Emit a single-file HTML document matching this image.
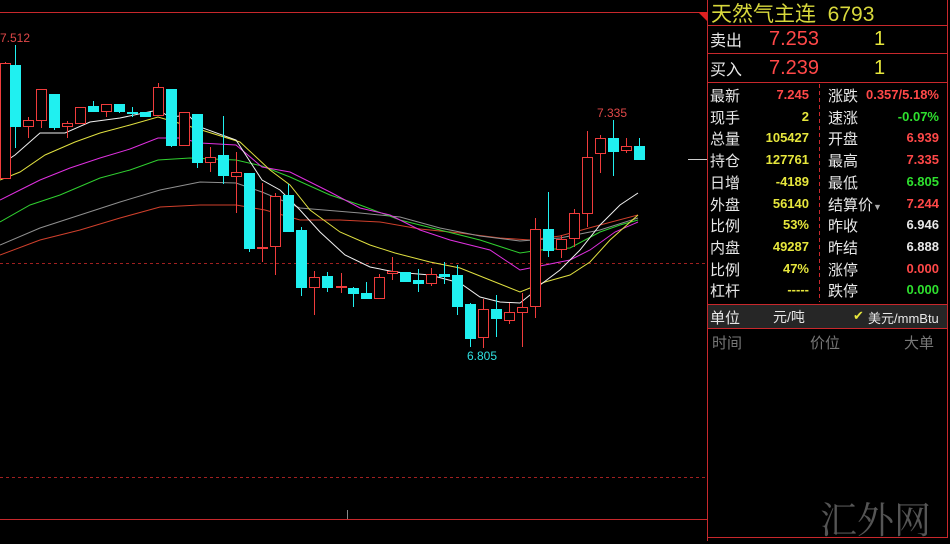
<!DOCTYPE html>
<html><head><meta charset="utf-8"><style>
*{margin:0;padding:0;box-sizing:border-box}
body{width:950px;height:541px;background:#000;overflow:hidden;position:relative;font-family:"Liberation Sans","Noto Sans CJK SC",sans-serif}
.t{position:absolute;white-space:nowrap}
.l{color:#e8e8e8;font-size:15px}
.y{color:#e6e63c;font-weight:bold;font-size:13px;text-align:right}
.r{color:#ff4848;font-weight:bold;font-size:13px;text-align:right}
.g{color:#2ee02e;font-weight:bold;font-size:13px;text-align:right}
.w{color:#e8e8e8;font-weight:bold;font-size:13px;text-align:right}
</style></head><body>
<svg width="950" height="541" style="position:absolute;left:0;top:0">
<line x1="0" y1="12.5" x2="707" y2="12.5" stroke="#c8282c"/>
<polygon points="698,12 707,12 707,21" fill="#e02020"/>
<line x1="707.5" y1="0" x2="707.5" y2="541" stroke="#c8282c"/>
<line x1="947.5" y1="0" x2="947.5" y2="537" stroke="#c8282c"/>
<line x1="707" y1="537.5" x2="948" y2="537.5" stroke="#c8282c"/>
<line x1="0" y1="519.5" x2="707" y2="519.5" stroke="#c8282c"/>
<line x1="707" y1="25.5" x2="948" y2="25.5" stroke="#c8282c"/>
<line x1="707" y1="53.5" x2="948" y2="53.5" stroke="#c8282c"/>
<line x1="707" y1="82.5" x2="948" y2="82.5" stroke="#c8282c"/>
<line x1="819.5" y1="84" x2="819.5" y2="302" stroke="#c8282c" stroke-dasharray="4,3"/>
<rect x="708" y="304" width="239" height="24" fill="#262626"/>
<line x1="707" y1="304.5" x2="948" y2="304.5" stroke="#c8282c"/>
<line x1="707" y1="328.5" x2="948" y2="328.5" stroke="#c8282c"/>
<line x1="0" y1="263.5" x2="707" y2="263.5" stroke="#a02020" stroke-dasharray="3,3"/>
<line x1="0" y1="477.5" x2="707" y2="477.5" stroke="#a02020" stroke-dasharray="3,3"/>
<line x1="347.5" y1="510" x2="347.5" y2="519" stroke="#888"/>
<line x1="688" y1="159.5" x2="707" y2="159.5" stroke="#ccc"/>
<g fill="none" stroke-width="1">
<polyline stroke="#d0402c" points="0,255 40,240 80,230 120,218 160,207 200,205 236,205 265,210 300,220 340,220 380,222 420,229 460,233 500,238 530,240 560,236 600,225 638,215"/>
<polyline stroke="#909090" points="0,245 40,228 80,215 120,202 160,190 200,182 236,183 262,192 300,208 360,213 400,217 440,228 480,236 520,241 560,238 600,230 638,218"/>
<polyline stroke="#30d030" points="0,222 30,205 60,195 100,178 130,170 158,160 190,158 236,160 262,166 290,177 330,195 360,205 400,220 440,230 480,240 520,253 540,250 570,248 600,232 620,225 638,220"/>
<polyline stroke="#e030e0" points="0,200 20,190 40,180 70,168 100,158 130,149 158,138 180,138 200,143 236,145 262,167 290,172 330,192 360,208 390,215 420,230 450,240 490,250 520,270 545,265 570,260 590,250 615,232 638,222"/>
<polyline stroke="#e0e040" points="0,180 20,172 45,155 75,142 100,133 130,125 158,117 175,122 195,128 240,142 270,170 290,185 310,210 340,232 370,245 395,253 430,262 460,268 490,280 520,292 530,288 545,282 570,275 590,262 610,240 638,215"/>
<polyline stroke="#f0f0f0" points="0,165 15,155 40,133 65,133 90,122 120,118 158,110 170,117 180,116 190,117 200,127 236,140 262,180 280,190 300,210 320,232 345,255 370,267 395,272 430,275 460,283 480,297 500,302 520,303 530,295 540,285 560,270 580,250 600,225 620,205 638,193"/>
</g>
<g id="c"></g>
<text x="0" y="42" fill="#e04848" font-size="12" font-family="Liberation Sans">7.512</text>
<text x="597" y="117" fill="#e04848" font-size="12" font-family="Liberation Sans">7.335</text>
<text x="467" y="360" fill="#30e0e0" font-size="12" font-family="Liberation Sans">6.805</text>
</svg>
<script>
var C=[[0,63,179,62,179,'r'],[10,65,127,45,148,'c'],[23,120,127,117,138,'r'],[36,89,121,89,128,'r'],[49,94,128,94,130,'c'],[62,123,127,121,138,'r'],[75,107,124,107,124,'r'],[88,106,112,101,112,'c'],[101,104,112,104,117,'r'],[114,104,112,104,113,'c'],[127,112,114,107,117,'c'],[140,112,117,112,117,'c'],[153,87,116,83,116,'r'],[166,89,146,89,147,'c'],[179,112,146,112,146,'r'],[192,114,163,114,168,'c'],[205,157,163,147,172,'r'],[218,155,176,116,184,'c'],[231,172,177,152,213,'r'],[244,173,249,173,252,'c'],[257,247,249,183,262,'r'],[270,196,247,193,275,'r'],[283,195,232,184,232,'c'],[296,230,288,227,296,'c'],[309,277,288,271,315,'r'],[322,276,288,272,292,'c'],[336,286,288,273,293,'r'],[348,288,294,287,307,'c'],[361,293,299,282,299,'c'],[374,277,299,274,299,'r'],[387,271,274,257,280,'r'],[400,272,282,272,282,'c'],[413,280,284,269,292,'c'],[426,274,284,268,286,'r'],[439,274,277,262,284,'c'],[452,275,307,265,315,'c'],[465,304,339,303,347,'c'],[478,309,338,299,348,'r'],[491,309,319,295,337,'c'],[504,312,321,303,324,'r'],[517,307,313,293,347,'r'],[530,229,307,218,318,'r'],[543,229,251,192,257,'c'],[556,239,250,235,258,'r'],[569,213,239,209,247,'r'],[582,157,214,131,227,'r'],[595,138,154,135,173,'r'],[608,138,152,120,176,'c'],[621,146,151,138,153,'r'],[634,146,160,138,160,'c']];
var s='';C.forEach(function(k){var x=k[0],w=11,m=x+5.5,col=k[5]=='r'?'#f03c3c':'#20f0f0';
s+='<line x1="'+m+'" y1="'+k[3]+'" x2="'+m+'" y2="'+k[4]+'" stroke="'+col+'"/>';
if(k[5]=='r'){s+='<rect x="'+(x+0.5)+'" y="'+(k[1]+0.5)+'" width="'+(w-1)+'" height="'+Math.max(1,k[2]-k[1]-1)+'" fill="#000" stroke="'+col+'"/>';}
else{s+='<rect x="'+x+'" y="'+k[1]+'" width="'+w+'" height="'+Math.max(2,k[2]-k[1])+'" fill="'+col+'"/>';}});
document.getElementById('c').innerHTML=s;
</script>
<div class="t" style="left:711px;top:-2px;color:#d8d83c;font-size:21px">天然气主连&nbsp;&nbsp;6793</div>
<div class="t l" style="left:710px;top:27px;font-size:16px">卖出</div>
<div class="t" style="left:769px;top:28px;color:#ff4848;font-size:20px">7.253</div>
<div class="t" style="left:874px;top:28px;color:#e6e63c;font-size:20px">1</div>
<div class="t l" style="left:710px;top:56px;font-size:16px">买入</div>
<div class="t" style="left:769px;top:57px;color:#ff4848;font-size:20px">7.239</div>
<div class="t" style="left:874px;top:57px;color:#e6e63c;font-size:20px">1</div>
<div id="rows"></div>
<script>
var R=[['最新','7.245','r','涨跌','0.357/5.18%','r'],['现手','2','y','速涨','-0.07%','g'],['总量','105427','y','开盘','6.939','r'],['持仓','127761','y','最高','7.335','r'],['日增','-4189','y','最低','6.805','g'],['外盘','56140','y','结算价<span style="font-size:9px;color:#aaa">▼</span>','7.244','r'],['比例','53%','y','昨收','6.946','w'],['内盘','49287','y','昨结','6.888','w'],['比例','47%','y','涨停','0.000','r'],['杠杆','-----','y','跌停','0.000','g']];
var h='';R.forEach(function(r,i){var y=85+i*21.7;
h+='<div class="t l" style="left:710px;top:'+y+'px">'+r[0]+'</div>';
h+='<div class="t '+r[2]+'" style="right:141px;top:'+(y+2)+'px">'+r[1]+'</div>';
h+='<div class="t l" style="left:828px;top:'+y+'px">'+r[3]+'</div>';
h+='<div class="t '+r[5]+'" style="right:11px;top:'+(y+2)+'px">'+r[4]+'</div>';});
document.getElementById('rows').innerHTML=h;
</script>
<div class="t l" style="left:710px;top:307px">单位</div>
<div class="t l" style="left:773px;top:307px;font-size:14px">元/吨</div>
<div class="t" style="left:853px;top:308px;color:#e6e63c;font-size:13px">✔</div>
<div class="t l" style="left:868px;top:308px;font-size:13px">美元/mmBtu</div>
<div class="t" style="left:712px;top:332px;color:#777;font-size:15px">时间</div>
<div class="t" style="left:810px;top:332px;color:#777;font-size:15px">价位</div>
<div class="t" style="left:904px;top:332px;color:#777;font-size:15px">大单</div>
<div class="t" style="left:820px;top:490px;color:#555;font-size:37px;font-family:'Noto Serif CJK SC',serif">汇外网</div>
</body></html>
